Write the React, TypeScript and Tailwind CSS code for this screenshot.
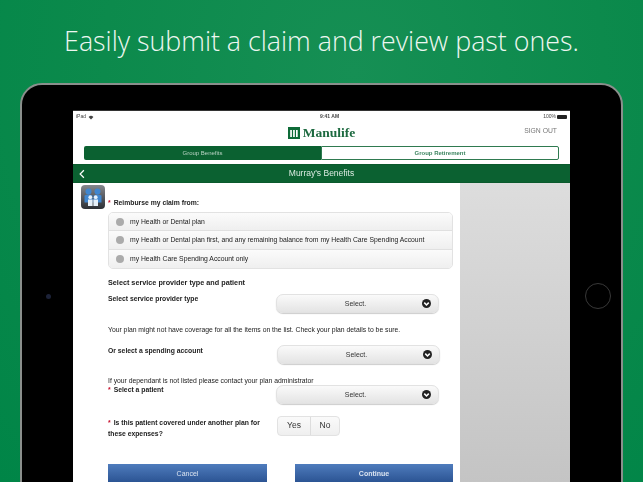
import React from "react";

function SelectBox() {
  return (
    <div className="flex h-[19px] w-[163px] shrink-0 items-center rounded-[7px] border border-[#e2e2e2] bg-gradient-to-b from-[#fafafa] to-[#e4e4e4] shadow-[0_1px_1px_#ccc]">
      <span className="flex-1 pl-[22px] text-center text-[7px] text-[#333]">Select.</span>
      <span className="ml-[10px] mr-[7px] flex h-[9px] w-[9px] items-center justify-center rounded-full bg-[#222]">
        <svg viewBox="0 0 10 10" className="h-[9px] w-[9px]">
          <path d="M2.5 4l2.5 2.6L7.5 4" fill="none" stroke="#fff" strokeWidth="1.7" />
        </svg>
      </span>
    </div>
  );
}

function Star() {
  return <span className="mr-[3px] text-[#c8102e]">*</span>;
}

function Option({ label, last }: { label: string; last?: boolean }) {
  return (
    <div className={`flex h-[18.33px] items-center bg-gradient-to-b from-[#fbfbfb] to-[#efefef] pl-[7px] ${last ? "" : "border-b border-[#e0e0e0]"}`}>
      <span className="h-[8px] w-[8px] rounded-full bg-[#ababab]" />
      <span className="ml-[6px] text-[6.8px] text-[#222]">{label}</span>
    </div>
  );
}

export default function App() {
  return (
    <div
      className="flex h-[482px] w-[643px] flex-col overflow-hidden bg-[radial-gradient(ellipse_at_55%_15%,#168f54_0%,#0c8a4c_50%,#008547_100%)]"
      style={{ fontFamily: '"Liberation Sans", Arial, sans-serif' }}
    >
      <div className="flex h-[83px] shrink-0 items-start justify-center pt-[21px]">
        <h1 className="text-[26.8px] leading-[40px] font-light whitespace-nowrap text-[#eef7f1] [font-family:'Open_Sans',sans-serif]">
          Easily submit a claim and review past ones.
        </h1>
      </div>

      <div className="mx-[20px] flex h-[426px] shrink-0 rounded-t-[22px] border-2 border-[#8a8f8c] bg-black">
        <div className="flex w-[51px] shrink-0 items-center justify-center">
          <span className="ml-[1px] h-[5px] w-[5px] rounded-full bg-[#1c2238]" />
        </div>

        <div className="mt-[25px] flex w-[497px] shrink-0 flex-col border-t border-[#333] bg-white blur-[0.45px]">
          <div className="flex h-[12px] shrink-0 items-center justify-between px-[3px] text-[5px] text-[#444]">
            <span className="flex items-center gap-[2px]">
              iPad
              <svg viewBox="0 0 10 8" className="h-[5px] w-[6px]">
                <path d="M5 7.5L1 3a6 6 0 018 0z" fill="#444" />
              </svg>
            </span>
            <span className="ml-[22px] font-bold">9:41 AM</span>
            <span className="flex items-center gap-[1px]">
              100%
              <span className="h-[4px] w-[10px] rounded-[1px] bg-[#222]" />
            </span>
          </div>

          <div className="relative flex h-[23px] shrink-0 items-center justify-center pb-[4px]">
            <div className="flex items-center gap-[3px]">
              <svg viewBox="0 0 12 12" className="h-[12px] w-[12px]">
                <rect width="12" height="12" fill="#0e6b38" />
                <rect x="2.2" y="3" width="1.7" height="7" fill="#fff" />
                <rect x="5.1" y="3" width="1.7" height="7" fill="#fff" />
                <rect x="8" y="3" width="1.7" height="7" fill="#fff" />
              </svg>
              <span className="text-[13.5px] leading-none font-bold text-[#1d6a40] [font-family:'Liberation_Serif',serif]">Manulife</span>
            </div>
            <span className="absolute top-[3px] right-[13px] text-[6.8px] text-[#777]">SIGN OUT</span>
          </div>

          <div className="mx-[11px] flex h-[14px] shrink-0 text-[6px]">
            <div className="flex w-[237px] items-center justify-center rounded-l-[2px] bg-[#0b6131] text-[#b9d3c3]">Group Benefits</div>
            <div className="flex flex-1 items-center justify-center rounded-r-[2px] border border-[#2f7a50] bg-white font-bold text-[#3d8560]">Group Retirement</div>
          </div>

          <div className="mt-[4px] flex h-[19px] shrink-0 items-center border-y border-[#0a5a2d] bg-[#0b6131] text-white">
            <svg viewBox="0 0 8 12" className="ml-[6px] h-[10px] w-[6px]">
              <path d="M6.5 1L1.5 6l5 5" fill="none" stroke="#fff" strokeWidth="1.6" />
            </svg>
            <span className="-ml-[12px] flex-1 text-center text-[8.5px] text-[#dcebe2]">Murray's Benefits</span>
          </div>

          <div className="flex min-h-0 flex-1">
            <div className="flex w-[387px] shrink-0 flex-col bg-white text-[6.8px] leading-[9px] text-[#222]">
              <div className="mt-[2px] flex h-[24px] items-end pl-[8px]">
                <svg viewBox="0 0 24 24" className="h-[24px] w-[24px] shrink-0">
                  <defs>
                    <linearGradient id="ic" x1="0" y1="0" x2="0" y2="1">
                      <stop offset="0" stopColor="#85888e" />
                      <stop offset="1" stopColor="#2c2f35" />
                    </linearGradient>
                  </defs>
                  <rect width="24" height="24" rx="4" fill="url(#ic)" />
                  <circle cx="7.5" cy="6.5" r="3" fill="#3f86d0" />
                  <circle cx="16.5" cy="6.5" r="3" fill="#3f86d0" />
                  <path d="M3.5 10.5q4-2 8 0v7h-8zM12.5 10.5q4-2 8 0v7h-8z" fill="#3f86d0" />
                  <circle cx="9.3" cy="12.2" r="1.9" fill="#e6f0fa" />
                  <circle cx="14.7" cy="12.2" r="1.9" fill="#e6f0fa" />
                  <path d="M7 14.6h4.6V21H7zM12.4 14.6H17V21h-4.6z" fill="#e6f0fa" />
                </svg>
                <span className="mb-[2px] ml-[3px] font-bold whitespace-nowrap"><Star />Reimburse my claim from:</span>
              </div>

              <div className="mt-[3px] ml-[35px] w-[345px] overflow-hidden rounded-[5px] border border-[#e2e2e2]">
                <Option label="my Health or Dental plan" />
                <Option label="my Health or Dental plan first, and any remaining balance from my Health Care Spending Account" />
                <Option label="my Health Care Spending Account only" last />
              </div>

              <div className="ml-[35px] flex flex-col">
                <p className="mt-[9px] text-[7.25px] font-bold">Select service provider type and patient</p>
                <div className="mt-[7px] flex items-start">
                  <span className="w-[168px] font-bold">Select service provider type</span>
                  <SelectBox />
                </div>
                <p className="mt-[12px]">Your plan might not have coverage for all the items on the list. Check your plan details to be sure.</p>
                <div className="mt-[11px] flex items-start">
                  <span className="mt-[1px] w-[169px] font-bold">Or select a spending account</span>
                  <SelectBox />
                </div>
                <p className="mt-[12px]">If your dependant is not listed please contact your plan administrator</p>
                <div className="flex items-start">
                  <span className="w-[168px] font-bold"><Star />Select a patient</span>
                  <SelectBox />
                </div>
                <div className="mt-[12px] flex items-start">
                  <span className="mt-[1px] w-[169px] pr-[4px] leading-[11px] font-bold"><Star />Is this patient covered under another plan for these expenses?</span>
                  <div className="flex h-[20px] w-[63px] items-center rounded-[4px] border border-[#e2e2e2] bg-gradient-to-b from-[#fafafa] to-[#efefef] text-[8.5px] text-[#333]">
                    <span className="flex h-full w-[33px] items-center justify-center border-r border-[#ddd]">Yes</span>
                    <span className="flex-1 text-center">No</span>
                  </div>
                </div>
                <div className="mt-[25px] flex gap-[28px]">
                  <div className="flex h-[20px] w-[159px] items-center justify-center bg-gradient-to-b from-[#4f7cbd] to-[#28508f] text-[7px] text-[#dbe4f1]">Cancel</div>
                  <div className="flex h-[20px] w-[158px] items-center justify-center bg-gradient-to-b from-[#4f7cbd] to-[#28508f] text-[7px] font-bold text-[#dbe4f1]">Continue</div>
                </div>
              </div>
            </div>
            <div className="flex-1 bg-gradient-to-b from-[#dddddd] to-[#c2c2c2]" />
          </div>
        </div>

        <div className="flex flex-1 items-center justify-center pl-[5px]">
          <span className="h-[26px] w-[26px] rounded-full border border-[#383838]" />
        </div>
      </div>
    </div>
  );
}
